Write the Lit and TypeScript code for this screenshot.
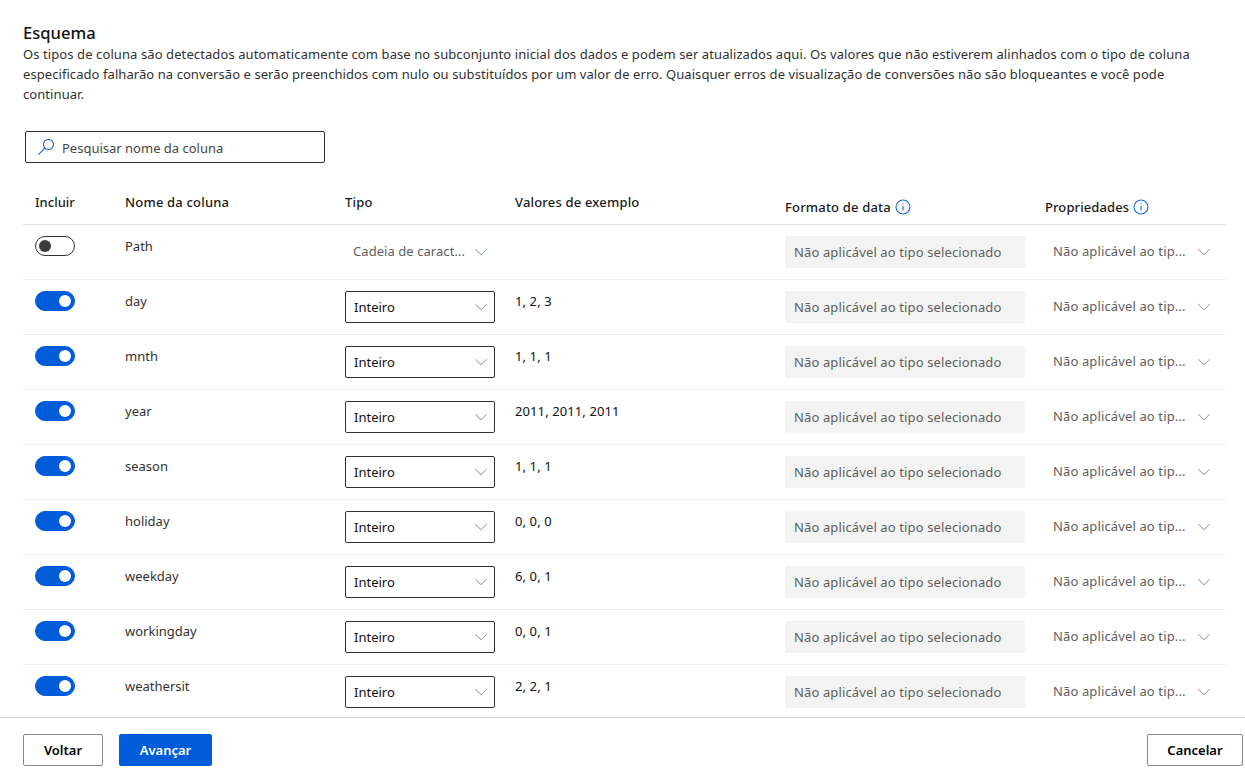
import { LitElement, html, css } from "lit";
import { customElement } from "lit/decorators.js";

interface Row { name: string; on: boolean; type: string; values: string; }

const rows: Row[] = [
  { name: "Path", on: false, type: "", values: "" },
  { name: "day", on: true, type: "Inteiro", values: "1, 2, 3" },
  { name: "mnth", on: true, type: "Inteiro", values: "1, 1, 1" },
  { name: "year", on: true, type: "Inteiro", values: "2011, 2011, 2011" },
  { name: "season", on: true, type: "Inteiro", values: "1, 1, 1" },
  { name: "holiday", on: true, type: "Inteiro", values: "0, 0, 0" },
  { name: "weekday", on: true, type: "Inteiro", values: "6, 0, 1" },
  { name: "workingday", on: true, type: "Inteiro", values: "0, 0, 1" },
  { name: "weathersit", on: true, type: "Inteiro", values: "2, 2, 1" },
];

const chevron = html`<svg class="chevron" width="12" height="12" viewBox="0 0 12 12"><path class="warm" d="M0.1 3.3L5.8 9L11.5 3.3"/><path class="cool" d="M0.6 3.1L6.2 8.6L11.9 3.1"/></svg>`;
const info = html`<svg class="info" width="16" height="16" viewBox="0 0 16 16"><circle cx="8" cy="8" r="7"/><path d="M8 7v4.4"/><path d="M8 4.4v1.2"/></svg>`;

@customElement("app-root")
export class AppRoot extends LitElement {
  static styles = css`
    :host { display: flex; flex-direction: column; height: 774px; overflow: hidden; background: #fff; box-sizing: border-box;
      font: 13px/20px "Noto Sans", "Open Sans", sans-serif; color: #323130; white-space: nowrap; }
    * { box-sizing: border-box; }
    .content { flex: none; height: 717px; padding: 22px 19px 0 23px; overflow: hidden; }
    h1 { margin: 0; font-size: 16.6px; line-height: 21px; font-weight: 500; color: #111; }
    .intro { margin: 1px 0 0; height: 60px; }
    .line { display: block; letter-spacing: 0.094px; }
    .line + .line { letter-spacing: 0.07px; }
    .search { display: flex; align-items: center; width: 300px; height: 32px; margin: 27px 0 0 2px; padding: 2px 12px 0; border: 1px solid #323130; border-radius: 2px; gap: 8px; color: #464543; }
    .search svg { fill: none; stroke: #2f5fe0; stroke-width: 1.1; margin-top: -2px; }
    .row { display: grid; grid-template-columns: 90px 220px 170px 270px 260px 1fr; width: 1203px; height: 55px; padding: 11px 0 0 12px; border-bottom: 1px solid #f0f0f0; }
    .head { height: 62px; padding-top: 29px; font-weight: 500; color: #1b1a19; border-color: #e4e4e4; letter-spacing: 0.18px; }
    .head .short { letter-spacing: 0; }
    .head .props-title { letter-spacing: 0.1px; }
    .withinfo { display: flex; align-items: center; gap: 4px; height: 20px; margin-top: 5px; }
    .info { fill: none; stroke: #1c6ae4; stroke-width: 1.1; margin-top: -1px; }
    .toggle { width: 40px; height: 20px; border: 1px solid #323130; border-radius: 10px; display: flex; align-items: center; padding: 0 3px; }
    .toggle i { width: 12px; height: 12px; border-radius: 6px; background: #3b3a39; }
    .toggle.on { background: #015cda; border-color: #015cda; justify-content: flex-end; }
    .toggle.on i { background: #fff; }
    .values { color: #111; letter-spacing: 0.1px; }
    .select { display: flex; align-items: center; justify-content: space-between; width: 150px; height: 32px; padding: 0 7px 0 8px; border: 1px solid #323130; border-radius: 2px; color: #111; }
    .plain { border-color: transparent; padding-left: 7px; color: #605e5c; letter-spacing: 0.06px; }
    .plain .label { margin-top: -2px; }
    .props { width: 173px; letter-spacing: 0.13px; }
    .format { width: 240px; height: 32px; padding: 0 9px; line-height: 33px; background: #f3f3f3; border-radius: 2px; color: #605e5c; letter-spacing: 0.125px; }
    .chevron { fill: none; stroke-width: 0.8; }
    .cool { stroke: #5aa0d8; stroke-opacity: 0.8; }
    .warm { stroke: #c58a58; stroke-opacity: 0.9; }
    footer { flex: 1; display: flex; align-items: flex-start; gap: 16px; padding: 16px 2px 0 23px; border-top: 1px solid #d2d0ce; }
    .btn { height: 32px; line-height: 30px; padding: 0; margin: 0; text-align: center; border: 1px solid #8a8886; border-radius: 2px; background: #fff; color: #000; font-family: inherit; font-size: 13px; font-weight: 600; }
    .back { width: 80px; }
    .next { width: 93px; background: #015cda; border-color: #015cda; color: #fff; }
    .cancel { width: 96px; margin-left: auto; }
  `;

  render() {
    return html`
      <div class="content">
        <h1>Esquema</h1>
        <p class="intro">
          <span class="line">Os tipos de coluna são detectados automaticamente com base no subconjunto inicial dos dados e podem ser atualizados aqui. Os valores que não estiverem alinhados com o tipo de coluna</span>
          <span class="line">especificado falharão na conversão e serão preenchidos com nulo ou substituídos por um valor de erro. Quaisquer erros de visualização de conversões não são bloqueantes e você pode</span>
          <span class="line">continuar.</span>
        </p>
        <div class="search">
          <svg width="16" height="16" viewBox="0 0 16 16"><circle cx="10.5" cy="5.5" r="5"/><path d="M7 9L0.4 15.6"/></svg>
          <span>Pesquisar nome da coluna</span>
        </div>
        <div class="row head">
          <span class="short">Incluir</span><span>Nome da coluna</span><span>Tipo</span><span>Valores de exemplo</span>
          <span class="withinfo"><span>Formato de data</span>${info}</span>
          <span class="withinfo props-title"><span>Propriedades</span>${info}</span>
        </div>
        ${rows.map((r) => html`
          <div class="row">
            <span class="toggle ${r.on ? "on" : ""}"><i></i></span>
            <span>${r.name}</span>
            <div class="select ${r.on ? "" : "plain"}"><span class="label">${r.on ? r.type : "Cadeia de caract..."}</span>${chevron}</div>
            <span class="values">${r.values}</span>
            <div class="format">Não aplicável ao tipo selecionado</div>
            <div class="select plain props"><span class="label">Não aplicável ao tip...</span>${chevron}</div>
          </div>`)}
      </div>
      <footer>
        <button class="btn back">Voltar</button>
        <button class="btn next">Avançar</button>
        <button class="btn cancel">Cancelar</button>
      </footer>`;
  }
}
